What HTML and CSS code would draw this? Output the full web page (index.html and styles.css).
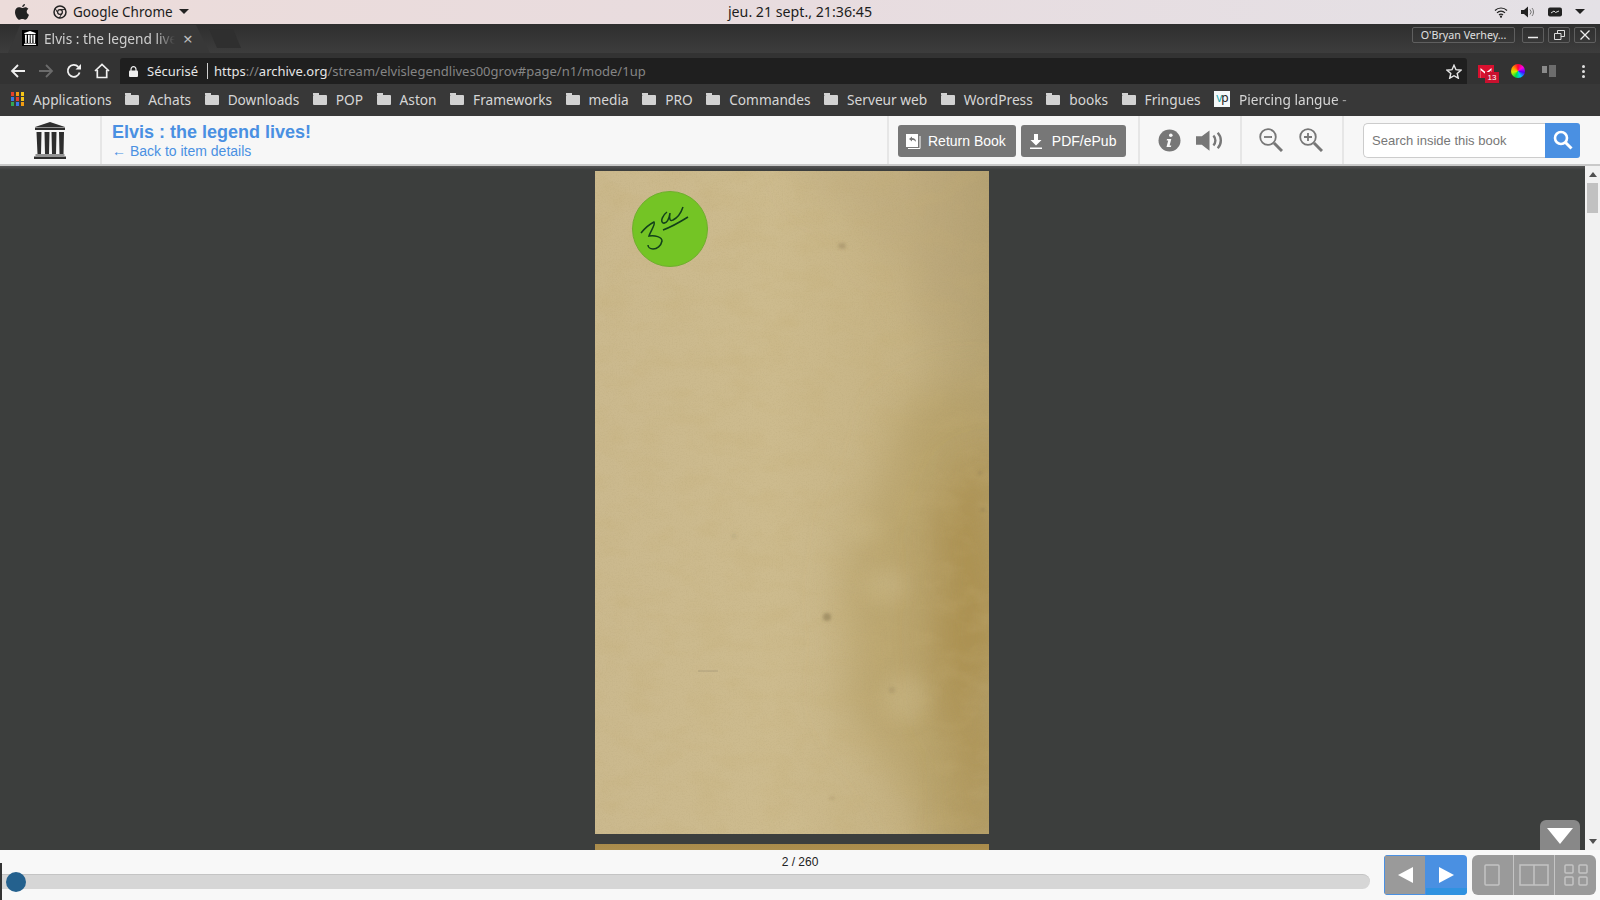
FILE: index.html
```html
<!DOCTYPE html>
<html lang="en">

<head>
    <meta charset="UTF-8">
    <title>Elvis : the legend lives!</title>
    <link rel="stylesheet" href="styles.css">
</head>

<body>
    <!-- Desktop top bar -->
    <div class="desktop-bar">
        <div class="desktop-left">
            <svg class="apple" width="14" height="16" viewBox="0 0 14 16"><path d="M10 0c.1 1.300-1.100 3-2.800 3C7 1.600 8.500.2 10 0zM7.200 4c.8 0 1.700-.8 3.200-.8 1 0 2.200.5 3 1.600-2.500 1.500-2 5 .6 6-.7 1.900-2.100 5-3.800 5-1.200 0-1.500-.7-2.900-.7s-1.800.7-2.900.7C2.500 15.800 0 11.500 0 8.200 0 5 2 3.300 3.900 3.300 5.300 3.300 6.300 4 7.200 4z" fill="#222"/></svg>
            <svg class="chrome-mark" width="14" height="14" viewBox="0 0 14 14"><circle cx="7" cy="7" r="6" fill="none" stroke="#222" stroke-width="1.500"/><circle cx="7" cy="7" r="2.400" fill="none" stroke="#222" stroke-width="1.200"/><path d="M7 4.600h5.500M5 8.400L2.200 3.500M8.800 8.600l-2.700 4.800" stroke="#222" stroke-width="1"/></svg>
            <span class="app-name">Google Chrome</span>
            <span class="caret"></span>
        </div>
        <div class="clock">jeu. 21 sept., 21:36:45</div>
        <div class="desktop-right">
            <svg width="14" height="12" viewBox="0 0 14 12"><path d="M1 4.500a8.500 8.500 0 0 1 12 0M3 6.800a5.500 5.500 0 0 1 8 0M5 9a2.800 2.800 0 0 1 4 0" fill="none" stroke="#222" stroke-width="1.200"/><circle cx="7" cy="10.700" r="1.100" fill="#222"/></svg>
            <svg width="14" height="12" viewBox="0 0 14 12"><path d="M0 4h3l4-3.500v11L3 8H0z" fill="#222"/><path d="M9 3.500a3.500 3.500 0 0 1 0 5M11 2a6 6 0 0 1 0 8" fill="none" stroke="#777" stroke-width="1"/></svg>
            <svg width="14" height="10" viewBox="0 0 14 10"><rect width="14" height="9" y=".5" rx="2" fill="#222"/><path d="M3 6l3-2 1.500 1.500L11 4" fill="none" stroke="#ddd" stroke-width="1"/></svg>
            <span class="caret"></span>
        </div>
    </div>

    <!-- Browser chrome -->
    <div class="tab-strip">
        <div class="tab">
            <div class="favicon">
                <svg width="14" height="14" viewBox="0 0 32 37"><use href="#ia-logo" fill="#fff"/></svg>
            </div>
            <span class="tab-title">Elvis : the legend lives!</span>
            <span class="tab-close">×</span>
        </div>
        <div class="new-tab"></div>
        <div class="window-buttons">
            <div class="profile">O'Bryan Verhey...</div>
            <div class="win-btn">
                <svg width="10" height="10" viewBox="0 0 10 10"><path d="M0 7.500h10" stroke="#eee" stroke-width="1.500"/></svg>
            </div>
            <div class="win-btn">
                <svg width="11" height="10" viewBox="0 0 11 10"><path d="M.5 3.500h6.500v6H.5zM3.500 3.500V.5h7v6H7" fill="none" stroke="#ddd" stroke-width="1"/></svg>
            </div>
            <div class="win-btn">
                <svg width="10" height="10" viewBox="0 0 10 10"><path d="M.5.5l9 9M9.500.5l-9 9" stroke="#eee" stroke-width="1.300"/></svg>
            </div>
        </div>
    </div>

    <div class="toolbar">
        <div class="nav-icons">
            <svg width="16" height="16" viewBox="0 0 16 16"><path d="M15 8H2M8 2L2 8l6 6" fill="none" stroke="#f0f0f0" stroke-width="1.800"/></svg>
            <svg width="16" height="16" viewBox="0 0 16 16"><path d="M1 8h13M8 2l6 6-6 6" fill="none" stroke="#6b6b6b" stroke-width="1.800"/></svg>
            <svg width="16" height="16" viewBox="0 0 16 16"><path d="M13.600 9.500A6 6 0 1 1 12.300 3.800" fill="none" stroke="#f0f0f0" stroke-width="1.800"/><path d="M9.500 6.500H15V1z" fill="#f0f0f0"/></svg>
            <svg width="16" height="16" viewBox="0 0 16 16"><path d="M1 8l7-6.500L15 8M3.300 7v7.500h9.400V7" fill="none" stroke="#f0f0f0" stroke-width="1.700"/></svg>
        </div>
        <div class="omnibox">
            <svg class="lock" width="9" height="11" viewBox="0 0 9 11"><path d="M2 5V3.200a2.500 2.500 0 0 1 5 0V5" fill="none" stroke="#eee" stroke-width="1.200"/><rect y="4.500" width="9" height="6.500" rx="1" fill="#eee"/></svg>
            <span class="secure">Sécurisé</span>
            <span class="url"><span class="url-host">https</span><span class="url-dim">://</span><span class="url-host">archive.org</span><span class="url-dim">/stream/elvislegendlives00grov#page/n1/mode/1up</span></span>
            <svg class="star" width="16" height="15" viewBox="0 0 16 15"><path d="M8 1.200l2 4.500 4.900.5-3.700 3.200 1.100 4.800L8 11.700l-4.300 2.500 1.100-4.800L1.100 6.200 6 5.700z" fill="none" stroke="#e8e8e8" stroke-width="1.400"/></svg>
        </div>
        <div class="extensions">
            <div class="gmail">
                <svg width="16" height="13" viewBox="0 0 16 13"><path d="M0 0h16v13H0z" fill="#d9102f"/><path d="M2.500 13V3L8 7.500 13.500 3v10" fill="#fff"/><path d="M2.500 5L8 9.500 13.500 5v8h-11z" fill="#d9102f"/></svg>
                <span class="badge">13</span>
            </div>
            <div class="color-wheel"></div>
            <svg class="grey-ext" width="14" height="12" viewBox="0 0 14 12"><rect y="1" width="5" height="7" fill="#8a8a8a"/><rect x="7" width="7" height="12" fill="#6d6d6d"/></svg>
            <div class="menu-dots"><i></i><i></i><i></i></div>
        </div>
    </div>

    <div class="bookmarks">
        <div class="bookmark">
            <div class="apps-grid">
                <i class="r"></i><i class="o"></i><i class="y"></i><i class="b"></i><i class="r"></i><i class="y"></i><i class="g"></i><i class="b"></i><i class="o"></i>
            </div>
            <span>Applications</span>
        </div>
        <div class="bookmark"><span class="folder"></span><span>Achats</span></div>
        <div class="bookmark"><span class="folder"></span><span>Downloads</span></div>
        <div class="bookmark"><span class="folder"></span><span>POP</span></div>
        <div class="bookmark"><span class="folder"></span><span>Aston</span></div>
        <div class="bookmark"><span class="folder"></span><span>Frameworks</span></div>
        <div class="bookmark"><span class="folder"></span><span>media</span></div>
        <div class="bookmark"><span class="folder"></span><span>PRO</span></div>
        <div class="bookmark"><span class="folder"></span><span>Commandes</span></div>
        <div class="bookmark"><span class="folder"></span><span>Serveur web</span></div>
        <div class="bookmark"><span class="folder"></span><span>WordPress</span></div>
        <div class="bookmark"><span class="folder"></span><span>books</span></div>
        <div class="bookmark"><span class="folder"></span><span>Fringues</span></div>
        <div class="bookmark">
            <div class="vp-icon"><span class="vp-v">v</span><span>p</span></div>
            <span class="piercing">Piercing langue -</span>
        </div>
    </div>

    <!-- Book reader header -->
    <header class="reader-head">
        <div class="logo-cell">
            <svg width="32" height="37" viewBox="0 0 32 37"><use href="#ia-logo" fill="#2e2e2e"/></svg>
        </div>
        <div class="title-cell">
            <h1>Elvis : the legend lives!</h1>
            <a class="back-link">← Back to item details</a>
        </div>
        <div class="action-cell">
            <button class="btn btn-return">
                <svg width="15" height="15" viewBox="0 0 15 15"><path d="M0 0h12v13H0z" fill="#fff"/><path d="M14 2v12.500H2" fill="none" stroke="#fff"/><path d="M3 5l3-2.500V4c2.500 0 4 1 4 4C9 6.500 8 6 6 6v1.500z" fill="#777"/></svg>
                Return Book
            </button>
            <button class="btn">
                <svg class="btn-dl" width="12" height="15" viewBox="0 0 12 15"><path d="M4 0h4v6h3.500L6 11.500.5 6H4zM0 13.500h12V15H0z" fill="#fff"/></svg>
                PDF/ePub
            </button>
        </div>
        <div class="icon-cell info-cell">
            <svg width="23" height="23" viewBox="0 0 23 23"><circle cx="11.500" cy="11.500" r="11" fill="#777"/><circle cx="12.800" cy="6.300" r="1.800" fill="#f8f8f8"/><path d="M9 10h4.300l-1.700 6.500h1.700l-.4 1.500H8.500l1.700-6.500H8.700z" fill="#f8f8f8"/></svg>
            <svg width="27" height="21" viewBox="0 0 28 21"><path d="M0 6h6l8-6v21l-8-6H0z" fill="#777"/><path d="M18 5.500a7 7 0 0 1 0 10M22.500 2.500a11.500 11.500 0 0 1 0 16" fill="none" stroke="#777" stroke-width="2.500"/></svg>
        </div>
        <div class="icon-cell zoom-cell">
            <svg width="24" height="24" viewBox="0 0 24 24"><circle cx="9" cy="9" r="7.800" fill="none" stroke="#777" stroke-width="1.800"/><path d="M5 9h8" stroke="#777" stroke-width="1.800"/><path d="M15 15l8 8" stroke="#777" stroke-width="3"/></svg>
            <svg width="24" height="24" viewBox="0 0 24 24"><circle cx="9" cy="9" r="7.800" fill="none" stroke="#777" stroke-width="1.800"/><path d="M5 9h8M9 5v8" stroke="#777" stroke-width="1.800"/><path d="M15 15l8 8" stroke="#777" stroke-width="3"/></svg>
        </div>
        <form class="search-cell">
            <input class="search-input" type="text" placeholder="Search inside this book">
            <button class="search-btn" type="button">
                <svg width="20" height="20" viewBox="0 0 20 20"><circle cx="8" cy="8" r="6" fill="none" stroke="#fff" stroke-width="2.600"/><path d="M12.500 12.500l6 6" stroke="#fff" stroke-width="3"/></svg>
            </button>
        </form>
    </header>

    <div class="viewer">
        <div class="pages">
            <div class="page">
                <!-- scanned paper: stains, spots and grain -->
                <svg class="paper" width="394" height="663" viewBox="0 0 394 663">
                    <defs>
                        <filter id="blotch" filterUnits="userSpaceOnUse" x="-100" y="-100" width="600" height="900">
                            <feTurbulence type="fractalNoise" baseFrequency="0.016" numOctaves="3" seed="7"/>
                            <feDisplacementMap in="SourceGraphic" scale="60" xChannelSelector="R" yChannelSelector="G"/>
                            <feGaussianBlur stdDeviation="20"/>
                        </filter>
                        <filter id="soft" x="-100%" y="-100%" width="300%" height="300%">
                            <feGaussianBlur stdDeviation="1.800"/>
                        </filter>
                        <filter id="soft-wide" filterUnits="userSpaceOnUse" x="0" y="0" width="394" height="663">
                            <feGaussianBlur stdDeviation="9"/>
                        </filter>
                        <filter id="mottle" x="0" y="0" width="100%" height="100%">
                            <feTurbulence type="fractalNoise" baseFrequency="0.03 0.05" numOctaves="5" seed="3"/>
                            <feColorMatrix values="0 0 0 0 .55  0 0 0 0 .42  0 0 0 0 .18  1.800 0 0 0 -.75"/>
                        </filter>
                        <filter id="grain" x="0" y="0" width="100%" height="100%">
                            <feTurbulence type="fractalNoise" baseFrequency="0.7" numOctaves="2" seed="11"/>
                            <feColorMatrix values="0 0 0 0 .35  0 0 0 0 .28  0 0 0 0 .12  1.600 0 0 0 -.7"/>
                        </filter>
                    </defs>
                    <path d="M300 240L394 215V663H330C300 600 270 560 250 500 235 440 270 330 300 240z" fill="#b49d62" opacity=".6" filter="url(#blotch)"/>
                    <path d="M360 300L394 280V663H355C385 590 335 480 360 300z" fill="#a98c48" opacity=".8" filter="url(#blotch)"/>
                    <path d="M200 -20H394V120L330 140C300 70 250 40 200 -20z" fill="#b5a077" opacity=".35" filter="url(#blotch)"/>
                    <g filter="url(#soft-wide)" fill="#d1c194" opacity=".35">
                        <ellipse cx="310" cy="528" rx="24" ry="24"/>
                        <ellipse cx="290" cy="415" rx="22" ry="18"/>
                        <ellipse cx="268" cy="358" rx="18" ry="12"/>
                        <ellipse cx="197" cy="656" rx="16" ry="10"/>
                    </g>
                    <rect width="394" height="663" filter="url(#mottle)" opacity=".3"/>
                    <rect width="394" height="663" filter="url(#grain)" opacity=".16"/>
                    <g filter="url(#soft)" fill="#7d6a45">
                        <ellipse cx="247" cy="75" rx="4" ry="3" opacity=".3"/>
                        <ellipse cx="232" cy="446" rx="4" ry="4" opacity=".45"/>
                        <ellipse cx="297" cy="519" rx="3" ry="3" opacity=".2"/>
                        <ellipse cx="385" cy="302" rx="1.500" ry="1.500" opacity=".5"/>
                        <ellipse cx="388" cy="339" rx="1.500" ry="1.500" opacity=".5"/>
                        <ellipse cx="139" cy="365" rx="3" ry="3" opacity=".12"/>
                        <ellipse cx="237" cy="627" rx="3" ry="2" opacity=".15"/>
                    </g>
                    <path d="M103 500H123" stroke="#8d836a" stroke-width=".8" opacity=".6"/>
                </svg>
                <svg class="sticker" width="76" height="76" viewBox="0 0 76 76">
                    <circle cx="38" cy="38" r="37.500" fill="#74c425" stroke="#6fae2e" stroke-width="1"/>
                    <path d="M9 42C13 37 18 33 22 31 24 33 18 41 17 45 23 44 30 46 30 50 29 55 25 58 21 58 18 58 16 56 16 54M35 21C31 24 28 30 31 32 35 33 37 28 38 22 37 28 38 31 41 29 45 27 49 22 51 16M31 39C39 36 48 31 56 26" fill="none" stroke="#12401a" stroke-width="1.500"/>
                </svg>
            </div>
            <div class="page page-next"></div>
        </div>
        <div class="scroll-down"><span></span></div>
        <div class="scrollbar">
            <span class="arrow-up"></span>
            <div class="thumb"></div>
            <span class="arrow-down"></span>
        </div>
    </div>

    <!-- Bottom navigation -->
    <footer class="reader-nav">
        <div class="slider-area">
            <div class="page-count">2 / 260</div>
            <div class="track"><div class="handle"></div></div>
        </div>
        <div class="pager">
            <button class="pager-btn prev"><span></span></button>
            <button class="pager-btn next"><span></span></button>
        </div>
        <div class="view-modes">
            <div class="view-mode">
                <svg width="16" height="22" viewBox="0 0 16 22"><rect x="1" y="1" width="14" height="20" rx="1" fill="none" stroke="#c4c4c4" stroke-width="1.500"/></svg>
            </div>
            <div class="view-mode">
                <svg width="30" height="22" viewBox="0 0 30 22"><path d="M1 1h28v20H1zM15 1v20" fill="none" stroke="#c4c4c4" stroke-width="1.500"/></svg>
            </div>
            <div class="view-mode">
                <svg width="24" height="22" viewBox="0 0 24 22"><g fill="none" stroke="#c4c4c4" stroke-width="1.500"><rect x="1" y="1" width="8" height="8" rx="1"/><rect x="15" y="1" width="8" height="8" rx="1"/><rect x="1" y="13" width="8" height="8" rx="1"/><rect x="15" y="13" width="8" height="8" rx="1"/></g></svg>
            </div>
        </div>
    </footer>

    <svg class="defs" width="0" height="0">
        <defs>
            <g id="ia-logo">
                <path d="M16 0l15 5H1zM1 5.500h30v2.500H1z"/>
                <path d="M2.500 10h5l-.5 22H3.500zM10.500 10h5l-.5 22h-4zM17.500 10h5l-.5 22h-4zM25 10h5l-.5 22h-4z"/>
                <path d="M1.500 32.500h29v1h-29zM0 34.500h32V37H0z"/>
            </g>
        </defs>
    </svg>
</body>

</html>
```

FILE: styles.css
```css
* {
    box-sizing: border-box;
}

html,
body {
    margin: 0;
    padding: 0;
    height: 900px;
    overflow: hidden;
}

body {
    display: flex;
    flex-direction: column;
    font-family: "Liberation Sans", Arial, sans-serif;
    background-color: #3c3e3d;
}

.defs {
    position: absolute;
}

/* Desktop top bar */
.desktop-bar {
    height: 24px;
    flex: none;
    display: flex;
    align-items: center;
    justify-content: space-between;
    padding: 0 15px 1px 15px;
    background: linear-gradient(90deg, #ecdcda, #e8dcdf 50%, #e4e1e6);
    color: #1c1c1c;
    font-family: "Noto Sans", sans-serif;
    font-size: 14px;
}

.desktop-left,
.desktop-right {
    display: flex;
    align-items: center;
    width: 300px;
}

.app-name {
    margin-left: 6px;
    font-size: 13.5px;
}

.chrome-mark {
    margin-left: 24px;
}

.desktop-left .caret {
    margin-left: 6px;
}

.desktop-right {
    justify-content: flex-end;
    gap: 13px;
}

.caret {
    width: 0;
    height: 0;
    border-left: 5px solid transparent;
    border-right: 5px solid transparent;
    border-top: 5px solid #222;
}

.clock {
    font-size: 14.2px;
}

/* Tabs */
.tab-strip {
    height: 29px;
    flex: none;
    display: flex;
    align-items: flex-end;
    padding-left: 8px;
    background: linear-gradient(#2e2e2e, #3d3d3d);
    position: relative;
}

.tab {
    width: 202px;
    height: 28px;
    display: flex;
    align-items: center;
    padding: 0 0 2px 14px;
    background-color: #383838;
    clip-path: polygon(0 100%, 12px 0, 188px 0, 202px 100%);
    color: #cfcfcf;
    font-family: "Noto Sans", sans-serif;
    font-size: 13.7px;
}

.favicon {
    width: 16px;
    height: 16px;
    flex: none;
    display: flex;
    align-items: center;
    justify-content: center;
    background-color: #000;
}

.tab-title {
    width: 131px;
    margin-left: 6px;
    white-space: nowrap;
    overflow: hidden;
    -webkit-mask-image: linear-gradient(90deg, #000 85%, transparent);
    mask-image: linear-gradient(90deg, #000 85%, transparent);
}

.tab-close {
    margin-left: 8px;
    color: #bdbdbd;
    font-size: 17px;
    line-height: 1;
}

.new-tab {
    width: 32px;
    height: 19px;
    margin: 0 0 5px -1px;
    background-color: #2f2f2f;
    clip-path: polygon(0 0, 24px 0, 32px 100%, 8px 100%);
}

.window-buttons {
    margin-left: auto;
    align-self: flex-start;
    display: flex;
    gap: 4px;
    padding: 3px 4px 0 0;
    color: #e0e0e0;
    font-family: "Noto Sans", sans-serif;
    font-size: 10.7px;
}

.profile {
    width: 103px;
    height: 16px;
    margin-right: 3px;
    line-height: 14px;
    text-align: center;
    border: 1px solid #5f5f5f;
    border-radius: 2px;
}

.win-btn {
    width: 22px;
    height: 16px;
    display: flex;
    align-items: center;
    justify-content: center;
    border: 1px solid #5f5f5f;
    border-radius: 2px;
}

/* Address bar */
.toolbar {
    height: 31px;
    flex: none;
    display: flex;
    align-items: flex-start;
    background-color: #333;
    padding-top: 5px;
}

.nav-icons {
    width: 120px;
    flex: none;
    display: flex;
    gap: 12px;
    padding: 5px 0 0 10px;
}

.omnibox {
    width: 1347px;
    height: 26px;
    flex: none;
    display: flex;
    align-items: center;
    padding-left: 9px;
    background-color: #1f1f1f;
    border-radius: 3px 3px 0 0;
    font-family: "Noto Sans", sans-serif;
    font-size: 13px;
    color: #e6e6e6;
}

.secure {
    margin-left: 9px;
    padding-right: 9px;
    border-right: 1px solid #cfcfcf;
    line-height: 16px;
}

.url {
    margin-left: 6px;
}

.url-dim {
    color: #858585;
}

.url-host {
    color: #e6e6e6;
}

.star {
    margin-left: auto;
    margin-right: 5px;
}

.extensions {
    flex: 1;
    display: flex;
    align-items: center;
    height: 26px;
    padding-left: 11px;
}

.gmail {
    position: relative;
    width: 16px;
    height: 13px;
    display: flex;
}

.badge {
    position: absolute;
    left: 7px;
    top: 7px;
    width: 14px;
    height: 11px;
    background-color: #c8102e;
    color: #fff;
    font-size: 8px;
    line-height: 11px;
    text-align: center;
}

.color-wheel {
    width: 14px;
    height: 14px;
    margin-left: 17px;
    border-radius: 50%;
    background: conic-gradient(#ff0030, #ff00e0, #5000ff, #00c8ff, #00e040, #d0f000, #ff9000, #ff0030);
}

.grey-ext {
    margin-left: 17px;
}

.menu-dots {
    margin-left: 26px;
    display: flex;
    flex-direction: column;
    gap: 2px;
}

.menu-dots i {
    width: 3px;
    height: 3px;
    background-color: #e0e0e0;
    border-radius: 50%;
}

/* Bookmarks */
.bookmarks {
    height: 32px;
    flex: none;
    display: flex;
    align-items: center;
    gap: 13.5px;
    padding: 0 0 2px 11px;
    background-color: #383838;
    color: #d6d6d6;
    font-family: "Noto Sans", sans-serif;
    font-size: 13.7px;
    white-space: nowrap;
}

.bookmark {
    display: flex;
    align-items: center;
    gap: 9px;
}

.apps-grid {
    width: 13px;
    height: 14px;
    display: grid;
    grid-template-columns: repeat(3, 3px);
    grid-auto-rows: 4px;
    gap: 1px 2px;
}

.apps-grid i.r { background-color: #e5402b; }
.apps-grid i.o { background-color: #f39c12; }
.apps-grid i.y { background-color: #f5c518; }
.apps-grid i.g { background-color: #34a853; }
.apps-grid i.b { background-color: #3b78e7; }

.folder {
    position: relative;
    width: 14px;
    height: 10px;
    margin-top: 2px;
    background-color: #d2d2d2;
    border-radius: 1px;
}

.folder::before {
    content: "";
    position: absolute;
    left: 0;
    top: -2px;
    width: 6px;
    height: 2px;
    background-color: #d2d2d2;
}

.vp-icon {
    width: 16px;
    height: 16px;
    background-color: #f4f8f9;
    color: #222;
    font-size: 12px;
    line-height: 14px;
    letter-spacing: -1px;
    text-align: center;
}

.vp-v {
    color: #27a9b4;
}

.piercing {
    -webkit-mask-image: linear-gradient(90deg, #000 88%, #0008);
    mask-image: linear-gradient(90deg, #000 88%, #0008);
}

/* Reader header */
.reader-head {
    height: 50px;
    flex: none;
    display: flex;
    background-color: #f7f7f7;
    border-bottom: 2px solid #c9c9c9;
}

.logo-cell {
    width: 102px;
    flex: none;
    display: flex;
    align-items: center;
    justify-content: center;
    border-right: 2px solid #e6e6e6;
}

.title-cell {
    flex: 1;
    padding: 7px 0 0 10px;
}

h1 {
    margin: 0;
    color: #4a90e2;
    font-size: 18px;
    line-height: 19px;
    font-weight: bold;
}

.back-link {
    display: block;
    color: #4a90e2;
    font-size: 14px;
    line-height: 19px;
}

.action-cell {
    width: 253px;
    flex: none;
    display: flex;
    gap: 5px;
    padding: 9px 0 0 9px;
    border-left: 2px solid #e6e6e6;
    border-right: 2px solid #e6e6e6;
}

.btn {
    height: 32px;
    display: flex;
    align-items: center;
    gap: 7px;
    padding: 0 10px 0 8px;
    border: none;
    border-radius: 3px;
    background-color: #777;
    color: #fff;
    font-family: "Liberation Sans", Arial, sans-serif;
    font-size: 14px;
}

.btn-return {
    padding-right: 10px;
}

.btn-dl {
    margin: 0 3px 0 1px;
}

.icon-cell {
    flex: none;
    display: flex;
    align-items: center;
    border-right: 2px solid #e6e6e6;
}

.info-cell {
    width: 102px;
    gap: 15px;
    padding-left: 18px;
}

.zoom-cell {
    width: 102px;
    gap: 16px;
    padding-left: 17px;
}

.search-cell {
    display: flex;
    align-items: center;
    margin: 0;
    padding: 0 20px 0 19px;
}

.search-input {
    width: 182px;
    height: 35px;
    padding: 1px 8px 0;
    border: 1px solid #ccc;
    border-right: none;
    border-radius: 5px 0 0 5px;
    background-color: #fff;
    font-family: "Liberation Sans", Arial, sans-serif;
    font-size: 13px;
}

.search-input::placeholder {
    color: #777;
    opacity: 1;
}

.search-btn {
    width: 35px;
    height: 35px;
    display: flex;
    align-items: center;
    justify-content: center;
    padding: 0;
    border: none;
    border-radius: 0 3px 3px 0;
    background-color: #4a90e2;
}

/* Viewer */
.viewer {
    flex: 1;
    position: relative;
    min-height: 0;
    overflow: hidden;
    background: linear-gradient(#555, #3c3e3d 4px);
}

.pages {
    width: 1584px;
    display: flex;
    flex-direction: column;
    align-items: center;
    gap: 10px;
    padding-top: 5px;
}

.page {
    position: relative;
    width: 394px;
    height: 663px;
    flex: none;
    background: linear-gradient(90deg, #cbb98e, #cdbb8e 45%, #c6b384 78%, #b5a272);
}

.page-next {
    height: 40px;
    background: linear-gradient(#a98b4a, #bda56c);
}

.paper {
    display: block;
}

/* the sticker sits on the scanned page */
.sticker {
    position: absolute;
    left: 37px;
    top: 20px;
}

.scroll-down {
    position: absolute;
    left: 1540px;
    bottom: 0;
    width: 40px;
    height: 30px;
    display: flex;
    justify-content: center;
    padding-top: 8px;
    background-color: #888;
    border-radius: 6px 6px 0 0;
}

.scroll-down span {
    width: 0;
    height: 0;
    border-left: 13px solid transparent;
    border-right: 13px solid transparent;
    border-top: 16px solid #fff;
}

.scrollbar {
    position: absolute;
    right: 0;
    top: 0;
    width: 15px;
    height: 100%;
    display: flex;
    flex-direction: column;
    align-items: center;
    background-color: #f1f1f1;
}

.arrow-up {
    margin-top: 6px;
    border-left: 4px solid transparent;
    border-right: 4px solid transparent;
    border-bottom: 5px solid #505050;
}

.thumb {
    width: 11px;
    height: 30px;
    margin-top: 6px;
    background-color: #c1c1c1;
}

.arrow-down {
    margin-top: auto;
    margin-bottom: 6px;
    border-left: 4px solid transparent;
    border-right: 4px solid transparent;
    border-top: 5px solid #505050;
}

/* Bottom nav */
.reader-nav {
    height: 50px;
    flex: none;
    display: flex;
    align-items: center;
    background-color: #f8f8f8;
}

.slider-area {
    width: 1384px;
    flex: none;
    height: 50px;
    position: relative;
}

.page-count {
    height: 24px;
    padding-left: 216px;
    text-align: center;
    color: #222;
    font-size: 12px;
    line-height: 25px;
}

.track {
    width: 1370px;
    height: 15px;
    background-color: #d6d6d6;
    border-radius: 0 8px 8px 0;
    border-top: 1px solid #c4c4c4;
}

/* drag handle and the marker at the start of the bar */
.handle {
    position: absolute;
    left: 6px;
    top: 22px;
    width: 20px;
    height: 20px;
    border-radius: 50%;
    background-color: #24618e;
}

.slider-area::before {
    content: "";
    position: absolute;
    left: 0;
    top: 13px;
    width: 2px;
    height: 37px;
    background-color: #333;
}

.pager {
    display: flex;
    width: 83px;
    height: 40px;
    flex: none;
    border-radius: 4px;
    overflow: hidden;
}

.pager-btn {
    width: 42px;
    height: 40px;
    display: flex;
    align-items: center;
    justify-content: center;
    padding: 0;
    border: none;
}

.pager-btn.prev {
    background-color: #9a9a9a;
    border: 1px solid #4a90e2;
}

.pager-btn.next {
    background-color: #4a90e2;
    border-bottom: 7px solid #3092e0;
    width: 41px;
    padding-top: 7px;
}

.prev span {
    border-top: 8px solid transparent;
    border-bottom: 8px solid transparent;
    border-right: 15px solid #fff;
}

.next span {
    border-top: 8px solid transparent;
    border-bottom: 8px solid transparent;
    border-left: 15px solid #fff;
}

.view-modes {
    width: 124px;
    height: 40px;
    flex: none;
    display: flex;
    margin-left: 5px;
    background-color: #9a9a9a;
    border-radius: 6px;
}

.view-mode {
    flex: 1;
    display: flex;
    align-items: center;
    justify-content: center;
    border-left: 1px solid #c4c4c4;
}

.view-mode:first-child {
    border-left: none;
}
```
